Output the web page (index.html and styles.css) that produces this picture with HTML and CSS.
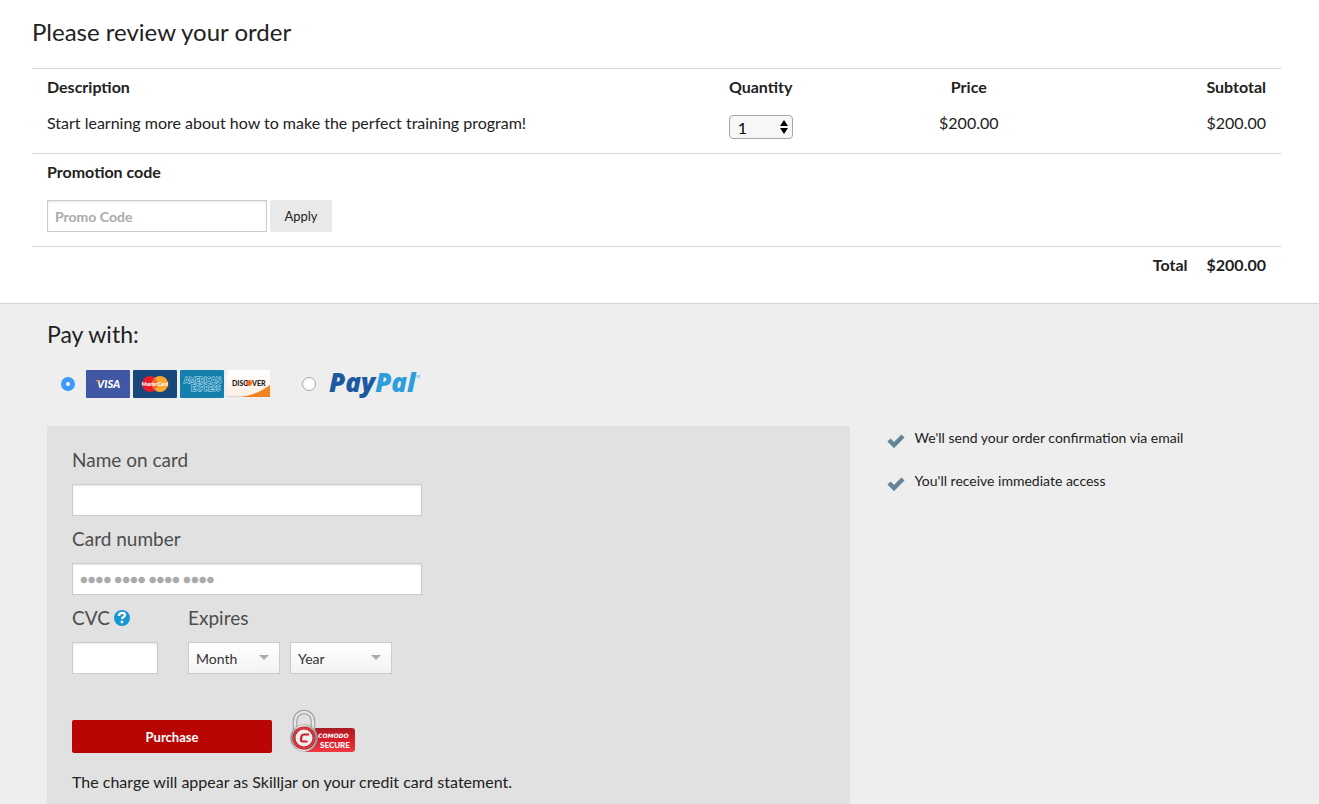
FILE: index.html
```html
<!DOCTYPE html>
<html lang="en">
<head>
    <meta charset="UTF-8">
    <meta name="viewport" content="width=device-width, initial-scale=1.0">
    <title>Checkout</title>
    <link rel="stylesheet" href="styles.css">
</head>
<body>

<section class="order">
    <h1>Please review your order</h1>
    <table class="items">
        <thead>
            <tr>
                <th class="description">Description</th>
                <th class="quantity"><label for="quantity">Quantity</label></th>
                <th class="price">Price</th>
                <th class="subtotal">Subtotal</th>
            </tr>
        </thead>
        <tbody>
            <tr>
                <td class="description">Start learning more about how to make the perfect training program!</td>
                <td class="quantity">
                    <div class="stepper">
                        <select id="quantity">
                            <option>1</option>
                            <option>2</option>
                            <option>3</option>
                        </select>
                        <svg class="stepper-arrows" width="8" height="14" viewBox="0 0 8 14"><path d="M4 0l4 6H0zM4 14l4-6H0z"/></svg>
                    </div>
                </td>
                <td class="price">$200.00</td>
                <td class="subtotal">$200.00</td>
            </tr>
        </tbody>
    </table>
    <form class="promo">
        <label for="promoCode">Promotion code</label>
        <div class="promo-row">
            <input type="text" id="promoCode" class="field" placeholder="Promo Code">
            <button type="button" class="apply">Apply</button>
        </div>
    </form>
    <div class="total"><span>Total</span><span>$200.00</span></div>
</section>

<section class="payment">
    <h2>Pay with:</h2>
    <div class="methods">
        <input type="radio" name="method" id="methodCard" checked>
        <label for="methodCard" class="cards" aria-label="Credit card">
            <!-- Visa -->
            <svg width="44" height="28" viewBox="0 0 44 28">
                <rect width="44" height="28" rx="1" fill="#3f57a5"/>
                <text x="11" y="18" font-size="11" font-weight="900" font-style="italic" fill="#fff">VISA</text>
                <path d="M9 10h4l1 4c-1-2-3-3-5-4z" fill="#f0a33c"/>
            </svg>
            <!-- MasterCard -->
            <svg width="44" height="28" viewBox="0 0 44 28">
                <rect width="44" height="28" rx="1" fill="#18477a"/>
                <circle cx="17" cy="14" r="8" fill="#e91c2b"/>
                <circle cx="27" cy="14" r="8" fill="#f9a72f"/>
                <path d="M22 8a8 8 0 0 1 0 12a8 8 0 0 1 0-12z" fill="#f2692a"/>
                <text x="22" y="16" font-size="5" font-weight="900" text-anchor="middle" fill="#fff">MasterCard</text>
            </svg>
            <!-- American Express -->
            <svg width="44" height="28" viewBox="0 0 44 28">
                <rect width="44" height="28" rx="1" fill="#147fad"/>
                <g font-size="7" font-weight="900" fill="#147fad" stroke="#b4e0ef" stroke-width="1" paint-order="stroke">
                    <text x="4" y="13">AMERICAN</text>
                    <text x="11" y="21">EXPRESS</text>
                </g>
            </svg>
            <!-- Discover -->
            <svg width="44" height="28" viewBox="0 0 44 28">
                <defs>
                    <linearGradient id="discoverBg" x1="0" y1="0" x2="0" y2="1">
                        <stop offset="0" stop-color="#fff"/>
                        <stop offset="1" stop-color="#fdeee4"/>
                    </linearGradient>
                </defs>
                <rect width="43" height="27" rx="1" fill="#dcd5cf"/>
                <rect width="43" height="26" rx="1" fill="url(#discoverBg)"/>
                <path d="M43 15v12H14c12-2 21-6 29-12z" fill="#f58220"/>
                <circle cx="22" cy="13" r="3" fill="#f26b21"/>
                <g font-size="7" font-weight="900" fill="#222">
                    <text x="5" y="16">DISC</text>
                    <text x="25" y="16">VER</text>
                </g>
            </svg>
        </label>
        <input type="radio" name="method" id="methodPaypal">
        <label for="methodPaypal" class="paypal" aria-label="PayPal">
            <svg class="paypal-logo" width="94" height="42" viewBox="0 0 94 42">
                <text class="paypal-word" x="2" y="29"><tspan fill="#1a5a9e">Pay</tspan><tspan fill="#2e9edb">Pal</tspan></text>
                <text x="87" y="15" font-size="4" fill="#2e9edb">TM</text>
            </svg>
        </label>
    </div>

    <div class="columns">
        <form class="panel">
            <label for="cardName">Name on card</label>
            <input type="text" id="cardName" class="field wide">

            <label for="cardNumber">Card number</label>
            <input type="text" id="cardNumber" class="field wide dots" placeholder="&#9679;&#9679;&#9679;&#9679; &#9679;&#9679;&#9679;&#9679; &#9679;&#9679;&#9679;&#9679; &#9679;&#9679;&#9679;&#9679;">

            <div class="card-details">
                <div class="cvc">
                    <label for="cvc">CVC
                        <svg class="help" width="18" height="18" viewBox="0 0 18 18">
                            <circle cx="9" cy="9" r="8" fill="#1496d4"/>
                            <path d="M6 7c0-4 6-4 6-1 0 2-3 2-3 4" fill="none" stroke="#fff" stroke-width="2.4"/>
                            <rect x="7.7" y="11.7" width="2.5" height="2.5" fill="#fff"/>
                        </svg>
                    </label>
                    <input type="text" id="cvc" class="field">
                </div>
                <div class="expires">
                    <label for="month">Expires</label>
                    <div class="selects">
                        <div class="dropdown month">
                            <select id="month"><option>Month</option><option>01</option><option>02</option></select>
                        </div>
                        <div class="dropdown year">
                            <select id="year" aria-label="Year"><option>Year</option><option>2016</option><option>2017</option></select>
                        </div>
                    </div>
                </div>
            </div>

            <div class="actions">
                <button type="button" class="purchase">Purchase</button>
                <!-- Comodo seal -->
                <svg class="seal" width="66" height="44" viewBox="0 -1 66 44">
                    <defs>
                        <linearGradient id="sealRed" x1="0" y1="0" x2="0" y2="1">
                            <stop offset="0" stop-color="#a91c24"/>
                            <stop offset="0.5" stop-color="#d81f2a"/>
                            <stop offset="1" stop-color="#ee3a43"/>
                        </linearGradient>
                        <linearGradient id="sealMetal" x1="0" y1="0" x2="1" y2="0">
                            <stop offset="0" stop-color="#8c8c8c"/>
                            <stop offset="0.4" stop-color="#f6f6f6"/>
                            <stop offset="1" stop-color="#8f8f8f"/>
                        </linearGradient>
                    </defs>
                    <rect x="14" y="18" width="51" height="24" rx="3" fill="url(#sealRed)"/>
                    <path d="M5 22V11a9 9 0 0 1 18 0v11" fill="none" stroke="#999" stroke-width="4.500"/>
                    <path d="M5 22V11a9 9 0 0 1 18 0v11" fill="none" stroke="#e4e4e4" stroke-width="2.500"/>
                    <circle cx="14" cy="28" r="13.500" fill="url(#sealMetal)" stroke="#999" stroke-width="0.5"/>
                    <circle cx="14" cy="28" r="11.500" fill="#c9202a"/>
                    <circle cx="14" cy="28" r="10" fill="none" stroke="#e88" stroke-width="1" stroke-dasharray="1 1"/>
                    <circle cx="14" cy="28" r="8.500" fill="#eee"/>
                    <path d="M19 24.500h-5q-2 0-2.500 2l-.5 2.500q-.3 2.500 1.500 2.500h5" fill="none" stroke="#d01f29" stroke-width="2.200"/>
                    <g fill="#fff">
                        <text class="seal-brand" x="28" y="28">COMODO</text>
                        <text x="30" y="38" font-size="8" font-weight="900">SECURE</text>
                    </g>
                </svg>
            </div>
            <p class="note">The charge will appear as Skilljar on your credit card statement.</p>
        </form>

        <ul class="perks">
            <li>
                <svg width="18" height="14" viewBox="0 0 18 14"><path d="M2 6l5 5 9-9" fill="none" stroke="#648499" stroke-width="4.500"/></svg>
                We'll send your order confirmation via email
            </li>
            <li>
                <svg width="18" height="14" viewBox="0 0 18 14"><path d="M2 6l5 5 9-9" fill="none" stroke="#648499" stroke-width="4.500"/></svg>
                You'll receive immediate access
            </li>
        </ul>
    </div>
</section>

</body>
</html>
```
FILE: styles.css
```css
* { box-sizing: border-box; }
body {
    margin: 0;
    min-height: 100vh;
    display: flex;
    flex-direction: column;
    font-family: Lato, sans-serif;
    font-size: 16px;
    line-height: 24px;
    color: #222;
    background: #fff;
}
input, select, button { font-family: inherit; }
h1, h2 {
    margin: 0;
    font-size: 24px;
    font-weight: 400;
    line-height: 32px;
}
svg { display: block; }

/* order summary */
.order { padding: 16px 38px 26px 32px; }
.order h1 { margin-bottom: 20px; }
.items {
    width: 100%;
    table-layout: fixed;
    border-collapse: collapse;
    border-top: 1px solid #d4d4d4;
    border-bottom: 1px solid #d4d4d4;
}
.items th, .items td {
    width: 16.66%;
    padding: 6px 15px;
    text-align: center;
    vertical-align: top;
}
.items td { padding-bottom: 14px; }
.items .description { width: 50%; text-align: left; }
.items .subtotal { text-align: right; }
.stepper {
    position: relative;
    width: 64px;
    margin: 4px auto 0;
}
.stepper select {
    display: block;
    appearance: none;
    width: 100%;
    height: 24px;
    padding: 0 8px;
    border: 1px solid #a6a6a6;
    border-radius: 4px;
    background: #f7f7f7;
    font-size: 16px;
    color: #000;
}
.stepper-arrows {
    position: absolute;
    top: 5px;
    right: 5px;
    pointer-events: none;
}
.promo {
    padding: 6px 15px 14px;
    border-bottom: 1px solid #d4d4d4;
}
.promo label { display: block; font-weight: 700; }
.promo-row { display: flex; gap: 3px; margin-top: 16px; }
.promo .field { width: 220px; }
.field {
    display: block;
    height: 32px;
    padding: 0 7px;
    border: 1px solid #ccc;
    border-radius: 0;
    background: #fff;
    box-shadow: inset 0 1px 2px rgba(0,0,0,0.1);
    font-size: 14px;
    font-weight: 700;
}
.field::placeholder { color: #aaa; }
.dots { font-size: 13px; }
.apply {
    width: 62px;
    height: 32px;
    padding: 0;
    border: none;
    border-radius: 2px;
    background: #e9e9e9;
    color: #222;
    font-size: 13px;
    cursor: pointer;
}
.total {
    display: flex;
    justify-content: flex-end;
    gap: 19px;
    padding: 6px 15px 0;
    font-weight: 700;
}

/* payment */
.payment {
    flex: 1;
    display: flex;
    flex-direction: column;
    padding: 14px 38px 0 32px;
    border-top: 1px solid #d4d4d4;
    background: #eee;
}
.payment h2 { padding-left: 15px; font-size: 23px; }
.methods {
    display: flex;
    align-items: center;
    margin: 13px 0 21px;
    padding-left: 29px;
}
.methods input {
    appearance: none;
    width: 14px;
    height: 14px;
    margin: 0 11px 0 0;
    border: 1px solid #a6a6a6;
    border-radius: 50%;
    background: #fff;
}
.methods input:checked { border: 5px solid #3b99fc; }
.cards { display: flex; gap: 3px; margin-right: 31px; }
.paypal-word {
    font-family: "Open Sans", sans-serif;
    font-size: 26px;
    font-weight: 800;
    font-style: italic;
}
.columns { flex: 1; display: flex; }
.panel {
    width: calc(66.66% - 30px);
    margin: 0 15px;
    padding: 22px 25px 9px;
    background: #e1e1e1;
}
.panel label {
    display: block;
    height: 24px;
    margin-bottom: 12px;
    font-size: 19px;
    color: #4d4d4d;
}
.wide { width: 350px; margin-bottom: 11px; }
.card-details { display: flex; gap: 30px; }
.cvc { width: 86px; }
.cvc label { display: flex; align-items: center; gap: 3px; }
.cvc .field { width: 100%; }
.selects { display: flex; gap: 10px; }
.dropdown { position: relative; }
.dropdown select {
    display: block;
    appearance: none;
    width: 100%;
    height: 32px;
    padding: 0 7px;
    border: 1px solid #ccc;
    border-radius: 0;
    background: linear-gradient(#fff, #f3f3f3);
    font-size: 14px;
    color: #333;
}
.dropdown::after {
    content: "";
    position: absolute;
    top: 13px;
    right: 11px;
    border: 5px solid transparent;
    border-top-color: #aaa;
    border-bottom: 0;
    pointer-events: none;
}
.month { width: 92px; }
.year { width: 102px; }
.actions {
    display: flex;
    align-items: flex-end;
    gap: 18px;
    margin-top: 35px;
}
.purchase {
    width: 200px;
    height: 33px;
    border: none;
    border-radius: 2px;
    background: #b90504;
    color: #fff;
    font-size: 13px;
    font-weight: 700;
    cursor: pointer;
}
.purchase:hover { background: #960303; }
.seal-brand {
    font-family: "DejaVu Sans", sans-serif;
    font-size: 6px;
    font-weight: 700;
    font-style: italic;
}
.note { margin: 17px 0 0; }
.perks {
    flex: 1;
    margin: 0;
    padding: 0 22px;
    list-style: none;
    font-size: 14px;
}
.perks li {
    display: flex;
    gap: 10px;
    margin-bottom: 19px;
}
.perks svg { margin-top: 8px; }
```
